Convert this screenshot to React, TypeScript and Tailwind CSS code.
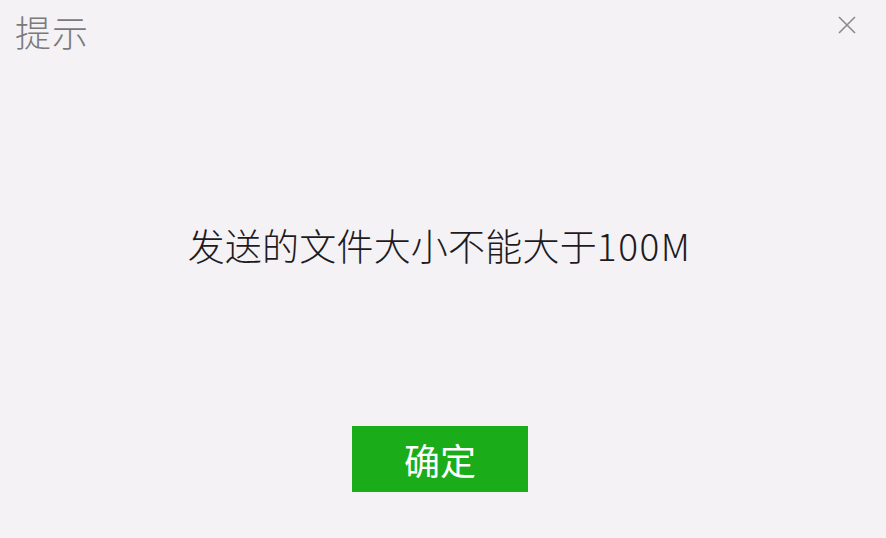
import React from "react";

export default function App() {
  return (
    <div
      className="w-[886px] h-[538px] bg-[#f4f2f5] flex flex-col overflow-hidden"
      style={{ fontFamily: '"Noto Sans CJK SC", "Noto Sans", sans-serif' }}
    >
      <div className="flex items-start justify-between h-[60px]">
        <div className="pl-[15px] pt-[11px] text-[36px] leading-[40px] font-light text-[#7a7a7a] tracking-[1px]">提示</div>
        <button className="mt-[16px] mr-[30px] w-[18px] h-[18px] flex items-center justify-center">
          <svg width="18" height="18" viewBox="0 0 18 18">
            <path d="M1 1L17 17M17 1L1 17" stroke="#8a8a8a" strokeWidth="1.6" fill="none" />
          </svg>
        </button>
      </div>
      <div className="mt-[163px] flex justify-center pr-[7px]">
        <div className="text-[37px] leading-[44px] font-light text-[#1e1a1e] tracking-[0.2px]">
          发送的文件大小不能大于<span className="tracking-[1.5px]">100M</span>
        </div>
      </div>
      <div className="mt-[159px] flex justify-center pr-[6px]">
        <button className="w-[176px] h-[66px] bg-[#1aad19] text-white text-[36px] leading-[40px] flex items-center justify-center">
          确定
        </button>
      </div>
    </div>
  );
}
